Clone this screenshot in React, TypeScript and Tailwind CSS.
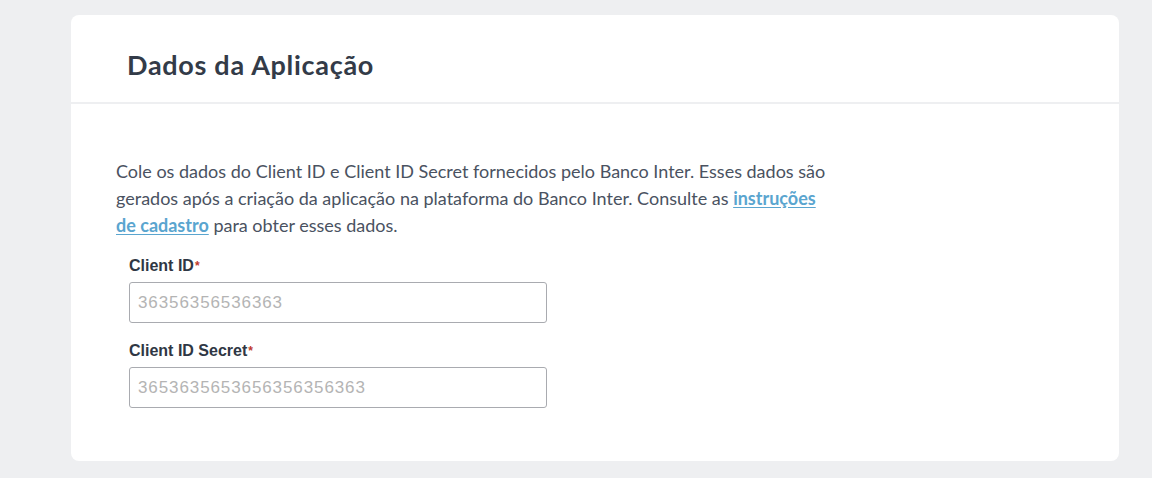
import React from "react";

export default function App() {
  return (
    <div className="min-h-[478px] w-[1152px] bg-[#eeeff1] pt-[15px] pb-[17px]">
      <div className="ml-[71px] w-[1048px] rounded-[8px] bg-white">
        <div className="h-[89px] border-b-2 border-[#eeeff1] pl-[56px] pt-[34px]">
          <h1 className="font-['Lato',sans-serif] text-[27px] font-bold leading-[32px] tracking-[0.7px] text-[#333b48]">
            Dados da Aplicação
          </h1>
        </div>
        <div className="pl-[45px] pt-[54px] pb-[53px]">
          <p className="max-w-[718px] font-['Lato',sans-serif] text-[18px] leading-[27px] text-[#4a5261]">
            Cole os dados do Client ID e Client ID Secret fornecidos pelo Banco Inter. Esses dados são gerados após a criação da aplicação na plataforma do Banco Inter. Consulte as{" "}
            <a href="#" className="font-bold text-[#5aa5cf] underline underline-offset-2">
              instruções de cadastro
            </a>{" "}
            para obter esses dados.
          </p>
          <div className="ml-[13px] mt-[17px] flex w-[418px] flex-col font-['Liberation_Sans',Arial,sans-serif]">
            <label className="mb-[6px] text-[16px] font-bold leading-[20px] text-[#2f3744]">
              Client ID<span className="ml-[1px] text-[12px] text-[#c0392b] align-top">*</span>
            </label>
            <input
              className="h-[41px] rounded-[3px] border border-[#a9abb0] px-[8px] text-[17px] tracking-[0.9px] text-[#333] placeholder-[#b4b4b4] outline-none"
              placeholder="36356356536363"
            />
            <label className="mb-[6px] mt-[18px] text-[16px] font-bold leading-[20px] text-[#2f3744]">
              Client ID Secret<span className="ml-[1px] text-[12px] text-[#c0392b] align-top">*</span>
            </label>
            <input
              className="h-[41px] rounded-[3px] border border-[#a9abb0] px-[8px] text-[17px] tracking-[0.9px] text-[#333] placeholder-[#b4b4b4] outline-none"
              placeholder="3653635653656356356363"
            />
          </div>
        </div>
      </div>
    </div>
  );
}
